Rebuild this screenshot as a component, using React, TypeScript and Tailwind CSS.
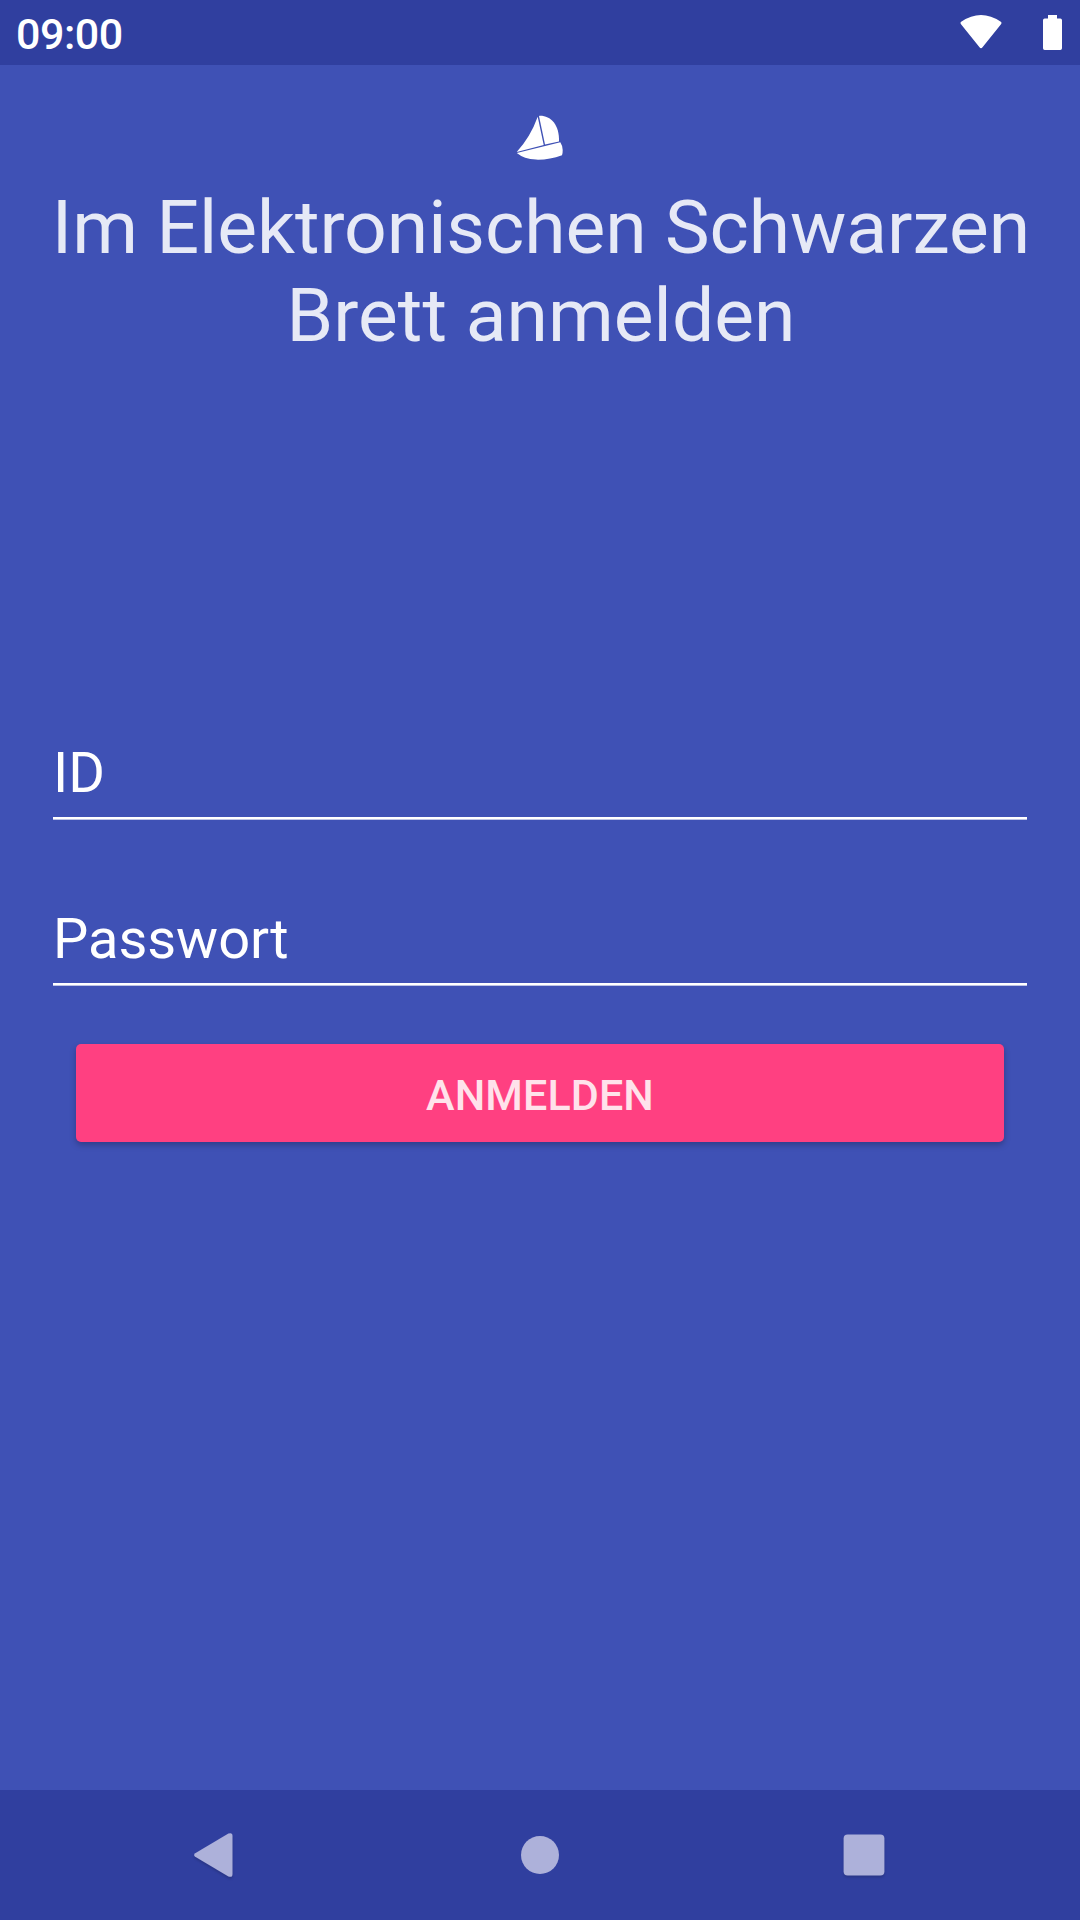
export default function App() {
  return (
    <div className="flex h-[1920px] w-[1080px] flex-col bg-[#3f51b5] font-[Roboto,sans-serif] text-white">
      <header className="flex h-[65px] items-start justify-between bg-[#303f9f] pl-4 pr-[18px]">
        <span className="pt-2 text-[43px] font-medium leading-[52px] tracking-[-0.5px]">09:00</span>
        <div className="flex items-start gap-[41px] pt-[15px]">
          <svg width="42" height="34" viewBox="0 0 42 34" fill="white">
            <path d="M1.2 6.8Q21-6.6 40.8 6.8Q42.1 7.8 41 9.2L22.5 32.3Q21 34.3 19.5 32.3L1 9.2Q-.1 7.8 1.2 6.8Z" />
          </svg>
          <svg width="19" height="35" viewBox="0 0 19 35" fill="white">
            <path d="M5 0h9v3.5h3.3Q19 3.5 19 5.2V33.3Q19 35 17.3 35H1.7Q0 35 0 33.3V5.2Q0 3.5 1.7 3.5H5z" />
          </svg>
        </div>
      </header>
      <main className="flex flex-1 flex-col px-[53px]">
        <svg className="mx-auto mt-[50px]" width="48" height="45" viewBox="0 0 48 45" fill="white">
          <path d="M21.7 1.8L27.7 29.9L.7 37Q14.5 22 21.7 1.8Z" />
          <path d="M23 .9C34 .2 43.5 9 43 26.6L29 29.4Z" />
          <path d="M.8 38L44.3 27.2Q46.8 31 46.7 35Q46.8 38 46 40.2Q33 45 20 44.6Q8 44 .8 38Z" />
        </svg>
        <h1 className="-ml-[9px] -mr-[11px] mt-[23px] whitespace-nowrap text-center text-[75px] font-normal leading-[88px] text-[#e6e9f6]">
          <span className="tracking-[-0.05px]">Im Elektronischen Schwarzen</span>
          <br />
          <span className="tracking-[0.05px]">Brett anmelden</span>
        </h1>
        <div className="mt-[382px] h-[78px] border-b-2 border-white text-[56px] leading-[64px] shadow-[0_1px_0_#bcc3e5]">ID</div>
        <div className="mt-[88px] h-[78px] border-b-2 border-white text-[56px] leading-[64px] tracking-[-0.05px] shadow-[0_1px_0_#bcc3e5]">Passwort</div>
        <button className="mx-[23px] mt-[59px] h-[98px] rounded-[5px] bg-[#ff4081] pt-[5px] text-[43px] font-medium tracking-[0.1px] text-[#ffe2eb] shadow-[0_3px_6px_rgba(0,0,0,0.25)]">
          ANMELDEN
        </button>
      </main>
      <nav className="flex h-[130px] items-center bg-[#303f9f] pl-[194px] text-[#adb1da]">
        <svg className="drop-shadow-[0_2px_1px_rgba(0,0,0,0.15)]" width="39" height="44" viewBox="0 0 39 44" fill="currentColor">
          <path d="M1.2 20.2L34.4.6Q38.5-1 38.5 3V41Q38.5 45 34.4 43.4L1.2 23.8Q-1 22 1.2 20.2Z" />
        </svg>
        <div className="ml-[288px] size-[38px] rounded-full bg-[#adb1da]" />
        <svg className="ml-[284px] drop-shadow-[0_2px_1px_rgba(0,0,0,0.15)]" width="42" height="42" viewBox="0 0 42 42" fill="currentColor">
          <rect x=".6" y=".6" width="40.8" height="40.8" rx="4" />
        </svg>
      </nav>
    </div>
  );
}
